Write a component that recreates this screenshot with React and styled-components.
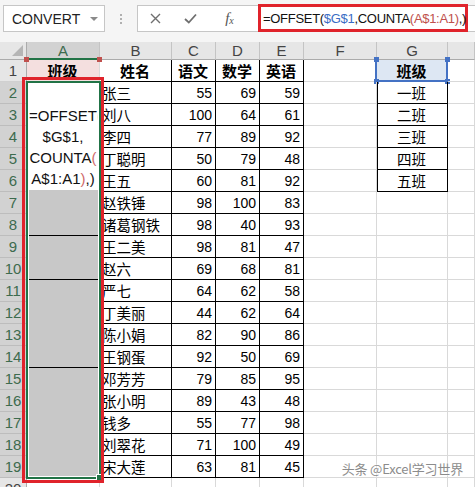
import React from "react";
import styled, { createGlobalStyle } from "styled-components";

const GlobalStyle = createGlobalStyle`
  html, body { margin: 0; padding: 0; background: #fff; }
  body { font-family: "Liberation Sans", Arial, "Noto Sans CJK SC", sans-serif; }
`;

const Page = styled.div`
  width: 475px;
  height: 487px;
  overflow: hidden;
  position: relative;
  background: #fff;
`;

const FormulaBar = styled.div`
  height: 42px;
  box-sizing: border-box;
  display: flex;
  align-items: flex-start;
  padding: 5px 0 0 3px;
  background: #f5f5f5;
`;

const NameBox = styled.div`
  width: 102px;
  height: 27px;
  box-sizing: border-box;
  border: 1px solid #c6c6c6;
  background: #fff;
  display: flex;
  align-items: center;
  justify-content: space-between;
  padding: 0 6px 0 8px;
  font-size: 14px;
  color: #222;
`;

const DropArrow = styled.span`
  width: 0;
  height: 0;
  border-left: 4px solid transparent;
  border-right: 4px solid transparent;
  border-top: 4px solid #8a8a8a;
`;

const Grip = styled.div`
  width: 32px;
  height: 27px;
  display: flex;
  flex-direction: column;
  align-items: center;
  justify-content: center;
  gap: 2px;
`;

const GripDot = styled.i`
  width: 2px;
  height: 2px;
  background: #b0b0b0;
`;

const FormulaBox = styled.div`
  flex: 1;
  height: 27px;
  box-sizing: border-box;
  border: 1px solid #c6c6c6;
  border-right: none;
  background: #fff;
  display: flex;
  align-items: flex-start;
`;

const BarButton = styled.div`
  width: ${p => p.$w}px;
  height: 25px;
  display: flex;
  align-items: center;
  justify-content: center;
  color: #707070;
`;

const FxLabel = styled.span`
  font-family: "Liberation Serif", serif;
  font-style: italic;
  font-size: 15px;
  color: #555;
  sub {
    font-size: 10px;
    vertical-align: -1px;
  }
`;

const FormulaMarked = styled.div`
  width: 210px;
  height: 28px;
  margin: -2px 0 0 7px;
  box-sizing: border-box;
  border: 3px solid #e0232b;
  display: flex;
  align-items: center;
  padding-left: 2px;
  font-size: 13px;
  letter-spacing: -0.3px;
  white-space: nowrap;
  color: #111;
`;

const Ref = styled.span`
  color: ${p => p.$c};
`;

const SheetWrap = styled.div`
  position: relative;
`;

const Grid = styled.div`
  display: grid;
  grid-template-columns: 27px 73px 72px 44px 44px 44px 73px 71px 1fr;
  grid-template-rows: 18px repeat(20, 22px);
`;

const Corner = styled.div`
  background: #e6e6e6;
  border-right: 1px solid #ababab;
  border-bottom: 1px solid #ababab;
  box-sizing: border-box;
  display: flex;
  align-items: flex-end;
  justify-content: flex-end;
  padding: 0 3px 3px 0;
`;

const ColHead = styled.div`
  box-sizing: border-box;
  background: ${p => (p.$sel ? "#d2d2d2" : "#e6e6e6")};
  color: ${p => (p.$sel ? "#3d6b4e" : "#444")};
  border-right: 1px solid #c4c4c4;
  border-bottom: ${p => (p.$sel ? "2px solid #217346" : "1px solid #ababab")};
  display: flex;
  align-items: center;
  justify-content: center;
  font-size: 15px;
`;

const RowHead = styled.div`
  box-sizing: border-box;
  background: ${p => (p.$sel ? "#d2d2d2" : "#e6e6e6")};
  color: ${p => (p.$sel ? "#3d6b4e" : "#444")};
  border-right: 1px solid #ababab;
  border-bottom: 1px solid ${p => (p.$sel ? "#bdbdbd" : "#d0d0d0")};
  display: flex;
  align-items: center;
  justify-content: center;
  font-size: 15px;
`;

const justify = { left: "flex-start", right: "flex-end", center: "center" };

const Cell = styled.div`
  box-sizing: border-box;
  position: relative;
  border-right: 1px solid ${p => (p.$box ? "#000" : "#d9d9d9")};
  border-bottom: 1px solid ${p => (p.$box ? "#000" : "#d9d9d9")};
  box-shadow: ${p => (p.$boxLeft ? "inset 1px 0 0 #000" : "none")};
  background: ${p => p.$bg || "transparent"};
  display: flex;
  align-items: center;
  justify-content: ${p => justify[p.$align || "left"]};
  padding: 0 3px 0 2px;
  white-space: nowrap;
  color: #000;
  font-size: ${p => (p.$cjk ? (p.$bold ? "15px" : "14.5px") : "14px")};
  font-weight: ${p => (p.$bold ? 700 : 400)};
  font-family: ${p =>
    p.$cjk
      ? '"Noto Sans CJK SC", sans-serif'
      : '"Liberation Sans", Arial, sans-serif'};
`;

const MergedCell = styled.div`
  box-sizing: border-box;
  grid-row: span ${p => p.$span};
  background: #c8c8c8;
  border-right: 1px solid #d9d9d9;
  border-bottom: 1px solid ${p => (p.$cut ? "#000" : "#d9d9d9")};
  overflow: hidden;
`;

const EditBox = styled.div`
  background: #fff;
  height: 108px;
  box-sizing: border-box;
  padding-top: 23px;
  font-size: 15px;
  line-height: 21px;
  color: #111;
  overflow: hidden;
`;

const EditLine = styled.div`
  text-align: center;
  white-space: nowrap;
  padding-left: ${p => p.$indent || 0}px;
`;

const RangeFrame = styled.div`
  position: absolute;
  top: 0;
  left: -2px;
  right: -1px;
  bottom: -1px;
  border: 2px solid ${p => p.$c};
  border-top: none;
  pointer-events: none;
`;

const RangeMark = styled.span`
  position: absolute;
  width: 5px;
  height: 5px;
  background: ${p => p.$c};
  ${p => (p.$top ? "top: -3px;" : "bottom: -3px;")}
  ${p => (p.$left ? "left: -3px;" : "right: -3px;")}
`;

const Selection = styled.div`
  position: absolute;
  left: 26px;
  top: 39px;
  width: 75px;
  height: 398px;
  box-sizing: border-box;
  border: 2px solid #217346;
  box-shadow: inset 0 0 0 1px #fff;
  pointer-events: none;
`;

const FillHandle = styled.span`
  position: absolute;
  right: -4px;
  bottom: -4px;
  width: 5px;
  height: 5px;
  background: #217346;
  border: 1px solid #fff;
`;

const Annotation = styled.div`
  position: absolute;
  left: 22px;
  top: 35px;
  width: 82px;
  height: 406px;
  box-sizing: border-box;
  border: 3px solid #e0232b;
  pointer-events: none;
`;

const Watermark = styled.div`
  position: absolute;
  right: 12px;
  bottom: 9px;
  font-family: "Noto Sans CJK SC", sans-serif;
  font-size: 13px;
  color: #8c8c8c;
  text-shadow: 0 0 2px #fff, 0 0 2px #fff;
  letter-spacing: -0.2px;
`;

const students = [
  ["张三", 55, 69, 59],
  ["刘八", 100, 64, 61],
  ["李四", 77, 89, 92],
  ["丁聪明", 50, 79, 48],
  ["王五", 60, 81, 92],
  ["赵铁锤", 98, 100, 83],
  ["诸葛钢铁", 98, 40, 93],
  ["王二美", 98, 81, 47],
  ["赵六", 69, 68, 81],
  ["严七", 64, 62, 58],
  ["丁美丽", 44, 62, 64],
  ["陈小娟", 82, 90, 86],
  ["王钢蛋", 92, 50, 69],
  ["邓芳芳", 79, 85, 95],
  ["张小明", 89, 43, 48],
  ["钱多", 55, 77, 98],
  ["刘翠花", 71, 100, 49],
  ["宋大莲", 63, 81, 45]
];

const classes = ["一班", "二班", "三班", "四班", "五班"];

// merged blocks in column A, keyed by starting row
const merges = { 2: { span: 7, cut: true }, 9: { span: 2, cut: true }, 11: { span: 4, cut: true }, 15: { span: 5 } };

const CrossIcon = () => (
  <svg width="11" height="11" viewBox="0 0 11 11">
    <path d="M1 1 L10 10 M10 1 L1 10" stroke="#6f6f6f" strokeWidth="1.4" />
  </svg>
);

const CheckIcon = () => (
  <svg width="13" height="11" viewBox="0 0 13 11">
    <path d="M1 6 L4.8 9.5 L12 1.5" stroke="#6f6f6f" strokeWidth="1.8" fill="none" />
  </svg>
);

const SelectAll = () => (
  <svg width="11" height="11" viewBox="0 0 11 11">
    <polygon points="11,0 11,11 0,11" fill="#b5b5b5" />
  </svg>
);

const Corners = ({ color, bottom }) => (
  <>
    <RangeMark $c={color} $top $left />
    <RangeMark $c={color} $top />
    {bottom && <RangeMark $c={color} $left />}
    {bottom && <RangeMark $c={color} />}
  </>
);

const App = () => {
  const cols = ["A", "B", "C", "D", "E", "F", "G", ""];
  const rows = [];

  for (let r = 1; r <= 20; r++) {
    const cells = [];
    cells.push(
      <RowHead key="h" $sel={r >= 2 && r <= 19}>
        {r}
      </RowHead>
    );

    // column A
    if (r === 1) {
      cells.push(
        <Cell key="a" $cjk $bold $align="center" $bg="#f4dfdf">
          班级
          <Corners color="#c0504d" />
        </Cell>
      );
    } else if (merges[r]) {
      cells.push(
        <MergedCell key="a" $span={merges[r].span} $cut={merges[r].cut}>
          {r === 2 && (
            <EditBox>
              <EditLine $indent={2}>
                =OFFSET<Ref $c="#9a9a9a">(</Ref>
              </EditLine>
              <EditLine>$G$1,</EditLine>
              <EditLine>
                COUNTA<Ref $c="#d06a6a">(</Ref>
              </EditLine>
              <EditLine>
                A$1:A1<Ref $c="#d06a6a">)</Ref>,)
              </EditLine>
            </EditBox>
          )}
        </MergedCell>
      );
    } else if (r === 20) {
      cells.push(<Cell key="a" />);
    }

    // columns B-E
    if (r === 1) {
      ["姓名", "语文", "数学", "英语"].forEach(t =>
        cells.push(
          <Cell key={t} $box $cjk $bold $align="center">
            {t}
          </Cell>
        )
      );
    } else if (r <= 19) {
      const [name, ...scores] = students[r - 2];
      cells.push(
        <Cell key="b" $box $cjk>
          {name}
        </Cell>
      );
      scores.forEach((s, i) =>
        cells.push(
          <Cell key={"s" + i} $box $align="right">
            {s}
          </Cell>
        )
      );
    } else {
      for (let i = 0; i < 4; i++) cells.push(<Cell key={"e" + i} />);
    }

    // column F
    cells.push(<Cell key="f" />);

    // column G
    if (r === 1) {
      cells.push(
        <Cell key="g" $cjk $bold $align="center" $bg="#dde7f3">
          班级
          <RangeFrame $c="#4472c4" />
          <Corners color="#4472c4" bottom />
        </Cell>
      );
    } else if (r <= 6) {
      cells.push(
        <Cell key="g" $box $boxLeft $cjk $align="center">
          {classes[r - 2]}
        </Cell>
      );
    } else {
      cells.push(<Cell key="g" />);
    }

    // column H
    cells.push(<Cell key="h2" />);
    rows.push(...cells);
  }

  return (
    <Page>
      <GlobalStyle />
      <FormulaBar>
        <NameBox>
          CONVERT
          <DropArrow />
        </NameBox>
        <Grip>
          <GripDot />
          <GripDot />
          <GripDot />
        </Grip>
        <FormulaBox>
          <BarButton $w={35}>
            <CrossIcon />
          </BarButton>
          <BarButton $w={35}>
            <CheckIcon />
          </BarButton>
          <BarButton $w={43}>
            <FxLabel>
              f<sub>x</sub>
            </FxLabel>
          </BarButton>
          <FormulaMarked>
            =OFFSET(<Ref $c="#3a6cc4">$G$1</Ref>,COUNTA
            <Ref $c="#c0504d">(A$1:A1)</Ref>,)
          </FormulaMarked>
        </FormulaBox>
      </FormulaBar>
      <SheetWrap>
        <Grid>
          <Corner>
            <SelectAll />
          </Corner>
          {cols.map((c, i) => (
            <ColHead key={c + i} $sel={c === "A"}>
              {c}
            </ColHead>
          ))}
          {rows}
        </Grid>
        <Selection>
          <FillHandle />
        </Selection>
        <Annotation />
      </SheetWrap>
      <Watermark>头条 @Excel学习世界</Watermark>
    </Page>
  );
};

export default App;
